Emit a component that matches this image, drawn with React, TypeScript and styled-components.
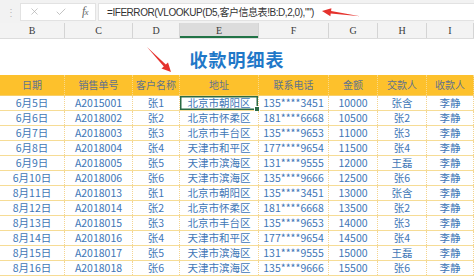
import styled, { createGlobalStyle } from 'styled-components'
import { X, Check } from 'lucide-react'

const GlobalStyle = createGlobalStyle`
  html, body {
    margin: 0;
    padding: 0;
    background: #ffffff;
  }
  body {
    font-family: "Noto Sans CJK SC", "Liberation Sans", sans-serif;
  }
`

const COLS = '65px 68px 47px 79px 70px 49px 49px 47px'

const letters = ['B', 'C', 'D', 'E', 'F', 'G', 'H', 'I']
const headers = ['日期', '销售单号', '客户名称', '地址', '联系电话', '金额', '交款人', '收款人']

const rows = [
  ['6月5日', 'A2015001', '张1', '北京市朝阳区', '135****3451', '10000', '张含', '李静'],
  ['6月6日', 'A2018002', '张2', '北京市怀柔区', '181****6668', '10500', '张2', '李静'],
  ['6月7日', 'A2018003', '张3', '北京市丰台区', '135****9653', '11000', '张3', '李静'],
  ['6月8日', 'A2018004', '张4', '天津市和平区', '177****9654', '11500', '张4', '李静'],
  ['6月9日', 'A2018005', '张5', '天津市滨海区', '131****9555', '12000', '王磊', '李静'],
  ['6月10日', 'A2018006', '张6', '天津市滨海区', '135****9666', '12500', '张6', '李静'],
  ['8月11日', 'A2018013', '张1', '北京市朝阳区', '135****3451', '13000', '张含', '李静'],
  ['8月12日', 'A2018014', '张2', '北京市怀柔区', '181****6668', '13500', '张2', '李静'],
  ['8月13日', 'A2018015', '张3', '北京市丰台区', '135****9653', '14000', '张3', '李静'],
  ['8月14日', 'A2018016', '张4', '天津市和平区', '177****9654', '14500', '张4', '李静'],
  ['8月15日', 'A2018017', '张5', '天津市滨海区', '131****9555', '15000', '王磊', '李静'],
  ['8月16日', 'A2018018', '张6', '天津市滨海区', '135****9666', '15500', '张6', '李静'],
]

const Page = styled.div`
  position: relative;
  width: 474px;
  height: 276px;
  overflow: hidden;
  background: #ffffff;
`

const FormulaBar = styled.div`
  display: flex;
  align-items: center;
  gap: 2px;
  height: 23px;
  padding: 0 0 0 6px;
  box-sizing: border-box;
  background: #f2f2f2;
`

const Grip = styled.span`
  width: 12px;
  color: #b8b8b8;
  font-size: 10px;
  line-height: 1;
`

const ButtonBox = styled.div`
  display: flex;
  align-items: center;
  justify-content: space-around;
  width: 76px;
  height: 18px;
  background: #ffffff;
  border: 1px solid #e2e2e2;
  box-sizing: border-box;
  color: #a9a9a9;
`

const Fx = styled.span`
  font-family: "Liberation Serif", serif;
  font-style: italic;
  font-size: 12px;
  color: #666;
  letter-spacing: -1px;

  small {
    font-size: 9px;
  }
`

const FormulaInput = styled.div`
  flex: 1;
  height: 18px;
  display: flex;
  align-items: center;
  padding-left: 8px;
  background: #ffffff;
  border: 1px solid #e2e2e2;
  border-right: none;
  box-sizing: border-box;
  font-family: "Liberation Sans", "Noto Sans CJK SC", sans-serif;
  font-size: 10px;
  letter-spacing: -0.45px;
  color: #333;
  white-space: nowrap;
`

const ColumnHeader = styled.div`
  display: grid;
  grid-template-columns: ${COLS};
  height: 15px;
  background: #f3f3f3;
  border-bottom: 1px solid #dcdcdc;
`

const Letter = styled.div<{ $active?: boolean }>`
  display: flex;
  align-items: center;
  justify-content: center;
  font-family: "Liberation Serif", serif;
  font-size: 10px;
  color: #3a3a3a;
  border-right: 1px solid #d4d4d4;
  background: ${({ $active }) => ($active ? '#dcdcdc' : 'transparent')};
  box-shadow: ${({ $active }) => ($active ? 'inset 0 -2px 0 #217346' : 'none')};
`

const TitleBand = styled.div`
  height: 36px;
  display: flex;
  align-items: center;
  justify-content: center;
  padding-top: 3px;
  box-sizing: border-box;
`

const Title = styled.h1`
  margin: 0;
  font-family: "Noto Sans CJK SC", sans-serif;
  font-size: 18px;
  font-weight: 700;
  color: #1f78c8;
  letter-spacing: 1px;
`

const Row = styled.div<{ $head?: boolean }>`
  display: grid;
  grid-template-columns: ${COLS};
  height: ${({ $head }) => ($head ? '21px' : '15px')};
  background: ${({ $head }) => ($head ? '#fdc12c' : '#ffffff')};
  border-bottom: 1px solid ${({ $head }) => ($head ? '#f7cf6a' : '#f6dc95')};
  box-sizing: border-box;
`

const Cell = styled.div<{ $head?: boolean; $selected?: boolean }>`
  position: relative;
  display: flex;
  align-items: center;
  justify-content: center;
  white-space: nowrap;
  font-size: ${({ $head }) => ($head ? '10px' : '10.5px')};
  line-height: 1;
  color: ${({ $head }) => ($head ? '#62738c' : '#3e76b6')};
  border-right: 1px dotted ${({ $head }) => ($head ? '#f9d98a' : '#f4d590')};
  box-shadow: ${({ $selected }) => ($selected ? 'inset 0 0 0 1.5px #2a6b45' : 'none')};

  &::after {
    content: '';
    display: ${({ $selected }) => ($selected ? 'block' : 'none')};
    position: absolute;
    right: -2px;
    bottom: -2px;
    width: 4px;
    height: 4px;
    background: #2a6b45;
    border: 1px solid #ffffff;
  }
`

const Overlay = styled.svg`
  position: absolute;
  top: 0;
  left: 0;
  pointer-events: none;
`

export default function App() {
  return (
    <Page>
      <GlobalStyle />
      <FormulaBar>
        <Grip>⋮</Grip>
        <ButtonBox>
          <X size={11} strokeWidth={1.4} />
          <Check size={12} strokeWidth={1.4} />
          <Fx>
            f<small>x</small>
          </Fx>
        </ButtonBox>
        <FormulaInput>=IFERROR(VLOOKUP(D5,客户信息表!B:D,2,0),"")</FormulaInput>
      </FormulaBar>

      <ColumnHeader>
        {letters.map((l) => (
          <Letter key={l} $active={l === 'E'}>
            {l}
          </Letter>
        ))}
      </ColumnHeader>

      <TitleBand>
        <Title>收款明细表</Title>
      </TitleBand>

      <Row $head>
        {headers.map((h) => (
          <Cell key={h} $head>
            {h}
          </Cell>
        ))}
      </Row>

      {rows.map((r, i) => (
        <Row key={i}>
          {r.map((v, j) => (
            <Cell key={j} $selected={i === 0 && j === 3}>
              {v}
            </Cell>
          ))}
        </Row>
      ))}

      <Overlay width="474" height="276" viewBox="0 0 474 276">
        <polygon
          points="322,11 331.4,8.2 331.1,10.9 360,16.2 330.7,13.5 330.4,16.2"
          fill="#e5322d"
        />
        <polygon
          points="171,72 168,62.4 165.8,64.5 147,47 163.8,66.5 161.5,68.6"
          fill="#e5322d"
        />
      </Overlay>
    </Page>
  )
}
